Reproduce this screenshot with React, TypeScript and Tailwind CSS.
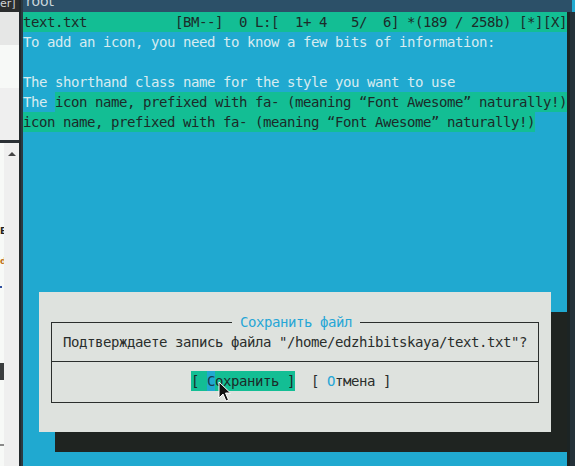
import React from "react";

const status =
  "text.txt           [BM--]  0 L:[  1+ 4   5/  6] *(189 / 258b) [*][X]";

export default function App() {
  const mono =
    "font-['DejaVu_Sans_Mono',monospace] text-[14px] tracking-[-0.43px] leading-[20px] whitespace-pre";
  return (
    <div className="w-[575px] h-[466px] overflow-hidden flex bg-[#20a9d0]">
      {/* left other window */}
      <div className="w-[19px] h-full flex flex-col shrink-0 font-['DejaVu_Sans',sans-serif]">
        <div className="h-[12px] bg-[#2b2d2e] text-[#d0d4d4] text-[11px] leading-[8px] overflow-hidden">
          er]
        </div>
        <div className="h-[33px] bg-[#e6e7e6]" />
        <div className="h-[43px] bg-[#f7f9f7]" />
        <div className="h-[52px] bg-[#efefef]" />
        <div className="h-[3px] bg-[#2b3035]" />
        <div className="flex-1 flex">
          <div className="w-[4px] bg-[#f7f9f7] flex flex-col">
            <div className="h-[83px]" />
            <div className="h-[10px] text-[9px] leading-[10px] font-bold text-[#222] overflow-hidden">E</div>
            <div className="h-[20px]" />
            <div className="h-[10px] text-[9px] leading-[10px] font-bold text-[#c07020] overflow-hidden">d</div>
            <div className="h-[20px]" />
            <div className="h-[2px] w-[2px] bg-[#3050a0]" />
            <div className="h-[75px]" />
            <div className="h-[17px] bg-[#3a3d3e]" />
            <div className="h-[64px]" />
            <div className="h-[2px] bg-[#8a8a8a]" />
          </div>
          <div className="flex-1 bg-[#efefef] flex justify-center pt-[9px]">
            <div className="w-0 h-0 border-l-[4px] border-r-[4px] border-b-[4px] border-l-transparent border-r-transparent border-b-[#444]" />
          </div>
        </div>
      </div>
      <div className="w-[2px] h-full bg-[#22282b] shrink-0" />
      <div className="w-[2px] h-full bg-[#2a3a42] shrink-0" />

      {/* terminal */}
      <div className="w-[544px] h-full flex flex-col shrink-0">
        <div className="h-[12px] bg-[#2c5068] overflow-hidden">
          <div className="pl-[3px] -mt-[7px] text-[14px] leading-[16px] text-[#c9d6dc] font-['DejaVu_Sans',sans-serif]">
            root
          </div>
        </div>
        <div className={`relative flex-1 ${mono}`}>
          <div className="h-[20px] bg-[#13be94] text-[#1c2b29]">{status}</div>
          <div className="h-[20px] text-[#d8ecf0]">
            To add an icon, you need to know a few bits of information:
          </div>
          <div className="h-[20px]" />
          <div className="h-[20px] text-[#d8ecf0]">
            The shorthand class name for the style you want to use
          </div>
          <div className="h-[20px] flex">
            <span className="text-[#d8ecf0]">{"The "}</span>
            <span className="bg-[#13be94] text-[#1c2b29]">
              icon name, prefixed with fa- (meaning “Font Awesome” naturally!)
            </span>
          </div>
          <div className="h-[20px] flex">
            <span className="bg-[#13be94] text-[#1c2b29]">
              icon name, prefixed with fa- (meaning “Font Awesome” naturally!)
            </span>
          </div>

          {/* dialog */}
          <div className="absolute left-[16px] top-[280px] w-[512px] h-[140px] bg-[#dee2de] shadow-[16px_20px_0_#1f2421] pt-[30px] px-[12px] text-[#2a2e2c]">
            <div className="relative border border-[#2a2e2c] h-[81px] flex flex-col">
              <div className="absolute left-[180px] -top-[11px] h-[20px] bg-[#dee2de] text-[#26a6d6]">
                {" Сохранить файл "}
              </div>
              <div className="h-[39px] border-b border-[#2a2e2c] pt-[9px] pl-[11px]">
                Подтверждаете запись файла "/home/edzhibitskaya/text.txt"?
              </div>
              <div className="h-[39px] pt-[9px] pl-[139px] flex items-start">
                <span className="h-[20px] bg-[#13be94] text-[#1c2b29] flex">
                  <span>{"[ "}</span>
                  <span className="bg-[#20a9d0] text-[#1a3a4a]">С</span>
                  <span>{"охранить ]"}</span>
                </span>
                <span>{"  [ "}</span>
                <span className="text-[#26a6d6]">О</span>
                <span>{"тмена ]"}</span>
              </div>
            </div>
          </div>

          {/* mouse pointer */}
          <svg
            className="absolute left-[195px] top-[369px]"
            width="14"
            height="22"
            viewBox="0 0 14 22"
          >
            <path
              d="M1 1 L1 17 L5 13 L8 20 L10.5 19 L7.5 12 L12.5 12 Z"
              fill="#111"
              stroke="#fff"
              strokeWidth="1"
              strokeLinejoin="round"
            />
          </svg>
        </div>
      </div>

      {/* right dark strip */}
      <div className="flex-1 h-full flex flex-col">
        <div className="h-[12px] bg-[#2c5068] w-[5px]" />
        <div className="flex-1 flex">
          <div className="w-[3px] bg-[#1c2424]" />
          <div className="flex-1 bg-[#24323a]" />
        </div>
      </div>
    </div>
  );
}
